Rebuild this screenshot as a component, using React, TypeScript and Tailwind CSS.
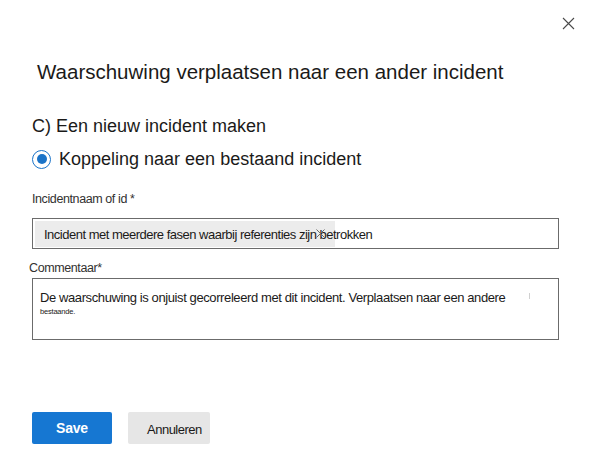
import React from "react";

const CloseIcon = () => (
  <svg width="13" height="13" viewBox="0 0 13 13" fill="none">
    <path d="M1 1L12 12M12 1L1 12" stroke="#4a4a4a" strokeWidth="1.1" />
  </svg>
);

const App = () => {
  return (
    <div className="w-[592px] h-[460px] bg-white flex flex-col font-['Liberation_Sans',Arial,sans-serif] text-[#1b1a19]">
      <div className="flex justify-end pt-[17px] pr-[17px]">
        <button className="w-[13px] h-[13px] flex items-center justify-center">
          <CloseIcon />
        </button>
      </div>

      <h1 className="mt-[28px] ml-[37px] text-[20.5px] leading-[28px] font-normal">
        Waarschuwing verplaatsen naar een ander incident
      </h1>

      <div className="mt-[28px] ml-[32px] text-[18px] leading-[24px]">
        C) Een nieuw incident maken
      </div>

      <div className="mt-[9px] ml-[32px] flex items-center gap-[8px] h-[24px]">
        <div className="w-[19px] h-[19px] rounded-full border-[1.5px] border-[#1a73c8] flex items-center justify-center">
          <div className="w-[10px] h-[10px] rounded-full bg-[#1a73c8]" />
        </div>
        <span className="text-[18px] leading-[24px]">
          Koppeling naar een bestaand incident
        </span>
      </div>

      <label className="mt-[20px] ml-[32px] text-[12.5px] leading-[16px] tracking-[-0.4px] text-[#323130]">
        Incidentnaam of id *
      </label>

      <div className="mt-[11px] ml-[32px] mr-[33px] h-[31px] border border-[#6b6b6b] flex items-center pl-[2px]">
        <div className="relative w-[300px] h-[26px] bg-[#ececec] flex items-center pl-[9px] pt-[2px]">
          <span className="text-[13px] leading-[16px] tracking-[-0.5px] whitespace-nowrap">
            Incident met meerdere fasen waarbij referenties zijn betrokken
          </span>
          <span className="absolute left-[281px] top-[8px]">
            <svg width="9" height="9" viewBox="0 0 9 9" fill="none">
              <path d="M0.5 0.5L8.5 8.5M8.5 0.5L0.5 8.5" stroke="#6b6b6b" strokeWidth="1" />
            </svg>
          </span>
        </div>
      </div>

      <label className="mt-[11px] ml-[29px] text-[12.5px] leading-[16px] tracking-[-0.4px] text-[#323130]">
        Commentaar*
      </label>

      <div className="mt-[2px] ml-[32px] mr-[33px] h-[62px] border border-[#6b6b6b] pt-[11px] pl-[7px] flex flex-col">
        <div className="flex items-start">
          <span className="text-[13px] leading-[16px] tracking-[-0.4px] whitespace-nowrap">
            De waarschuwing is onjuist gecorreleerd met dit incident. Verplaatsen naar een andere
          </span>
          <span className="ml-[24px] mt-[3px] w-px h-[6px] bg-[#d0d0d0]" />
        </div>
        <span className="text-[7.5px] leading-[10px] mt-[1px] tracking-[-0.2px]">bestaande.</span>
      </div>

      <div className="mt-[72px] ml-[32px] flex items-center gap-[16px]">
        <button className="w-[80px] h-[32px] rounded-[2px] bg-[#1677d2] text-white text-[14px] font-bold tracking-[-0.2px]">
          Save
        </button>
        <button className="w-[82px] h-[32px] rounded-[2px] bg-[#e6e6e6] text-[13px] tracking-[-0.5px] text-left pl-[19px] pt-[3px]">
          Annuleren
        </button>
      </div>
    </div>
  );
};

export default App;
